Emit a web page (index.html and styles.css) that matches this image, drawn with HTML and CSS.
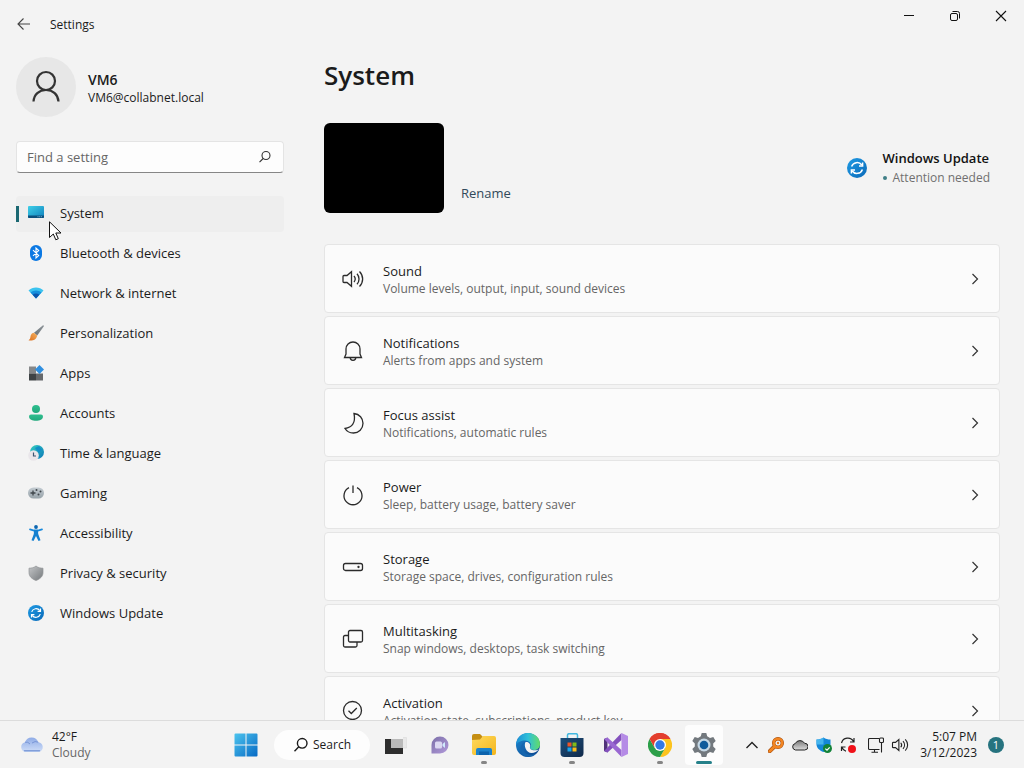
FILE: index.html
```html
<!DOCTYPE html>
<html lang="en">
<head>
    <meta charset="UTF-8">
    <meta name="viewport" content="width=device-width, initial-scale=1.0">
    <title>Settings</title>
    <link rel="stylesheet" href="styles.css">
</head>
<body>
    <!-- shared gradients and the update icon -->
    <svg class="defs" width="0" height="0" aria-hidden="true">
        <defs>
            <linearGradient id="screen" x1="0" y1="0" x2="1" y2="1"><stop offset="0" stop-color="#3fd0e8"/><stop offset="1" stop-color="#0f80bd"/></linearGradient>
            <linearGradient id="update-bg" x1="0" y1="0" x2="1" y2="1"><stop offset="0" stop-color="#1f9be4"/><stop offset="1" stop-color="#0a69b8"/></linearGradient>
            <linearGradient id="brush" x1="1" y1="0" x2="0" y2="1"><stop offset="0" stop-color="#8d9499"/><stop offset="1" stop-color="#6c7378"/></linearGradient>
            <linearGradient id="bristle" x1="1" y1="0" x2="0" y2="1"><stop offset="0" stop-color="#f5b260"/><stop offset="1" stop-color="#dc6f1e"/></linearGradient>
            <linearGradient id="person" x1="0" y1="0" x2="0" y2="1"><stop offset="0" stop-color="#2fbf8f"/><stop offset="1" stop-color="#21a87c"/></linearGradient>
            <linearGradient id="pad" x1="0" y1="0" x2="0" y2="1"><stop offset="0" stop-color="#c3cbd1"/><stop offset="1" stop-color="#98a3aa"/></linearGradient>
            <linearGradient id="shield" x1="0" y1="0" x2="1" y2="1"><stop offset="0" stop-color="#c4c6c8"/><stop offset="1" stop-color="#74787b"/></linearGradient>
            <linearGradient id="globe" x1="0" y1="0" x2="1" y2="1"><stop offset="0" stop-color="#35cfc0"/><stop offset="1" stop-color="#0b78b8"/></linearGradient>
            <linearGradient id="cloud" x1="0" y1="0" x2="0" y2="1"><stop offset="0" stop-color="#8eabe6"/><stop offset="1" stop-color="#cfdef8"/></linearGradient>
            <linearGradient id="win" x1="0" y1="0" x2="1" y2="1"><stop offset="0" stop-color="#4cc4ee"/><stop offset="1" stop-color="#0669c4"/></linearGradient>
            <linearGradient id="chat" x1="0" y1="0" x2="1" y2="1"><stop offset="0" stop-color="#7b6fa8"/><stop offset="1" stop-color="#b29ada"/></linearGradient>
            <linearGradient id="folder" x1="0" y1="0" x2="1" y2="1"><stop offset="0" stop-color="#ffda5e"/><stop offset="1" stop-color="#f3b51c"/></linearGradient>
            <linearGradient id="edge-top" x1="0" y1="0" x2="1" y2="0"><stop offset="0" stop-color="#1b8fd6"/><stop offset="0.5" stop-color="#2fc0d8"/><stop offset="1" stop-color="#63dc66"/></linearGradient>
            <linearGradient id="edge-low" x1="0" y1="0" x2="1" y2="1"><stop offset="0" stop-color="#1c8ad4"/><stop offset="1" stop-color="#0c3f86"/></linearGradient>
            <linearGradient id="bag" x1="0" y1="0" x2="1" y2="1"><stop offset="0" stop-color="#1c4f7c"/><stop offset="1" stop-color="#10294a"/></linearGradient>
            <linearGradient id="grey-cloud" x1="0" y1="0" x2="0" y2="1"><stop offset="0" stop-color="#777"/><stop offset="1" stop-color="#ddd"/></linearGradient>
        </defs>
        <symbol id="update" viewBox="0 0 20 20">
            <circle cx="10" cy="10" r="10" fill="url(#update-bg)"/>
            <path d="M4.600 8.600A5.800 5.800 0 0 1 14.800 7M15.400 11.400A5.800 5.800 0 0 1 5.200 13" fill="none" stroke="#fff" stroke-width="1.500"/>
            <path d="M15.600 4.400V8H12M4.400 15.600V12H8" fill="none" stroke="#fff" stroke-width="1.500"/>
        </symbol>
        <symbol id="chevron" viewBox="0 0 16 16">
            <path d="M5.500 3L10.500 8L5.500 13" fill="none" stroke="#333" stroke-width="1.200"/>
        </symbol>
    </svg>

    <div class="window">
        <header class="titlebar">
            <button class="back" aria-label="Back">
                <svg width="16" height="16" viewBox="0 0 16 16"><path d="M14 8H2.500M7.500 2.500L2 8L7.500 13.500" fill="none" stroke="#444" stroke-width="1.100"/></svg>
            </button>
            <span class="app-name">Settings</span>
            <div class="window-buttons">
                <button aria-label="Minimize"><svg width="12" height="12" viewBox="0 0 12 12"><path d="M1 5.500H11" stroke="#111"/></svg></button>
                <button aria-label="Restore"><svg width="12" height="12" viewBox="0 0 12 12" fill="none" stroke="#111"><rect x="1.500" y="3.500" width="7" height="7" rx="1.500"/><path d="M3.500 1.500H8.500A2 2 0 0 1 10.500 3.500V8.500"/></svg></button>
                <button aria-label="Close"><svg width="12" height="12" viewBox="0 0 12 12"><path d="M1 1L11 11M11 1L1 11" stroke="#111" stroke-width="1.100"/></svg></button>
            </div>
        </header>

        <div class="columns">
            <aside class="sidebar">
                <div class="profile">
                    <div class="avatar">
                        <svg width="32" height="36" viewBox="0 0 32 36" fill="none" stroke="#333" stroke-width="2.200"><circle cx="16" cy="12" r="9"/><path d="M3.500 32.500C4 25.500 9 21 16 21S28 25.500 28.500 32.500"/></svg>
                    </div>
                    <div class="user">
                        <div class="user-name">VM6</div>
                        <div class="user-mail">VM6@collabnet.local</div>
                    </div>
                </div>

                <div class="search-box">
                    <input type="text" placeholder="Find a setting" aria-label="Find a setting">
                    <svg width="14" height="14" viewBox="0 0 14 14" fill="none" stroke="#333" stroke-width="1.100"><circle cx="8" cy="5.500" r="4"/><path d="M5.200 8.500L1.500 12.200"/></svg>
                </div>

                <nav class="nav">
                    <a class="active" href="#system">
                        <svg width="16" height="16" viewBox="0 0 16 16"><rect y="1" width="16" height="12" rx="1" fill="url(#screen)"/><path d="M0 10.500H16V12A1 1 0 0 1 15 13H1A1 1 0 0 1 0 12Z" fill="#0b4f7d"/><path d="M9.500 11.700H14" stroke="#8ac7e2" stroke-width="0.800" stroke-dasharray="1 0.700"/></svg>
                        System
                    </a>
                    <a href="#bluetooth">
                        <svg width="16" height="16" viewBox="0 0 16 16"><rect x="2" width="12" height="16" rx="6" fill="#0b78e3"/><path d="M5 5.200L10.700 10.600L8 13V3L10.700 5.400L5 10.800" fill="none" stroke="#fff" stroke-width="1.100"/></svg>
                        Bluetooth &amp; devices
                    </a>
                    <a href="#network">
                        <svg width="16" height="16" viewBox="0 0 16 16"><path d="M0.500 5.500C4.500 1.500 11.500 1.500 15.500 5.500L8 13.500Z" fill="#3bc3ef"/><path d="M2.500 7.500C5.500 4.700 10.500 4.700 13.500 7.500L8 13.500Z" fill="#168fdc"/><path d="M4.600 9.700C6.500 8 9.500 8 11.400 9.700L8 13.500Z" fill="#0c55ac"/></svg>
                        Network &amp; internet
                    </a>
                    <a href="#personalization">
                        <svg width="16" height="16" viewBox="0 0 16 16"><path d="M14.700 0.400C15.600 0 16.100 0.700 15.700 1.500L9.200 10.500L6 7.700Z" fill="url(#brush)"/><path d="M6 7.700L9.200 10.500C8.500 15 4 16.300 0.500 15.300C2.700 14 2.100 12.500 2.700 10.500C3.200 8.800 4.500 8 6 7.700Z" fill="url(#bristle)"/></svg>
                        Personalization
                    </a>
                    <a href="#apps">
                        <svg width="16" height="16" viewBox="0 0 16 16"><rect x="1" y="1.500" width="7" height="7" fill="#858789"/><rect x="1" y="8.500" width="7" height="7" fill="#3e4245"/><rect x="8" y="8.500" width="7" height="7" fill="#66696c"/><path d="M11.500 0L16 4.500L11.500 9L7 4.500Z" fill="#2f8fe0"/></svg>
                        Apps
                    </a>
                    <a href="#accounts">
                        <svg width="16" height="16" viewBox="0 0 16 16"><circle cx="8" cy="4" r="4" fill="url(#person)"/><path d="M1 11.500Q1 9.500 3 9.500H13Q15 9.500 15 11.500C15 17.300 1 17.300 1 11.500Z" fill="url(#person)"/></svg>
                        Accounts
                    </a>
                    <a href="#time">
                        <svg width="16" height="16" viewBox="0 0 16 16"><circle cx="9" cy="7" r="7" fill="url(#globe)"/><path d="M7 3L11 1L14 5L11 8Z" fill="#128fc7"/><circle cx="5.500" cy="10.500" r="5.300" fill="#e9e6ea"/><path d="M5.500 7.500V11H8" fill="none" stroke="#3a5570" stroke-width="1.200"/></svg>
                        Time &amp; language
                    </a>
                    <a href="#gaming">
                        <svg width="16" height="16" viewBox="0 0 16 16"><rect y="2.500" width="16" height="11" rx="5.500" fill="url(#pad)"/><path d="M2.500 8H7.500M5 5.500V10.500" stroke="#3f464b" stroke-width="1.300"/><g fill="#3f464b"><circle cx="8.500" cy="5" r="1"/><circle cx="12.500" cy="6.500" r="1"/><circle cx="10.500" cy="9.500" r="1"/></g></svg>
                        Gaming
                    </a>
                    <a href="#accessibility">
                        <svg width="16" height="16" viewBox="0 0 16 16"><circle cx="8" cy="2" r="1.900" fill="#0c66b0"/><path d="M2 4.300L6 5.500H10L14 4.300" fill="none" stroke="#1889dc" stroke-width="1.800" stroke-linecap="round"/><path d="M6 5H10L10.200 9L12.500 15.200L10.500 16L8 11L5.500 16L3.500 15.200L5.800 9Z" fill="#1480d0"/></svg>
                        Accessibility
                    </a>
                    <a href="#privacy">
                        <svg width="16" height="16" viewBox="0 0 16 16"><path d="M8 1C10 2.700 12.500 3.200 15 3.200V7.500C15 11.500 12 14 8 15.500C4 14 1 11.500 1 7.500V3.200C3.500 3.200 6 2.700 8 1Z" fill="url(#shield)" stroke="#909396" stroke-width="0.700"/></svg>
                        Privacy &amp; security
                    </a>
                    <a href="#update-page">
                        <svg width="16" height="16"><use href="#update"/></svg>
                        Windows Update
                    </a>
                </nav>
            </aside>

            <main class="content">
                <h1>System</h1>

                <div class="device">
                    <div class="wallpaper"></div>
                    <a class="rename" href="#rename">Rename</a>
                    <a class="update-status" href="#update-page">
                        <svg width="20" height="20"><use href="#update"/></svg>
                        <span>
                            <strong>Windows Update</strong>
                            <small>Attention needed</small>
                        </span>
                    </a>
                </div>

                <div class="cards">
                    <button class="card">
                        <svg class="icon" width="24" height="24" viewBox="0 0 24 24"><path d="M2 9.500Q2 8.500 3 8.500H6L10.500 4.700V19.300L6 15.500H3Q2 15.500 2 14.500Z"/><path d="M13 9C14.400 10.700 14.400 13.300 13 15M16 6.800C18.700 9.800 18.700 14.200 16 17.200M18.500 4.500C22.700 8.800 22.700 15.200 18.500 19.500"/></svg>
                        <span class="label"><span class="name">Sound</span><span class="desc">Volume levels, output, input, sound devices</span></span>
                        <svg width="16" height="16"><use href="#chevron"/></svg>
                    </button>
                    <button class="card">
                        <svg class="icon" width="24" height="24" viewBox="0 0 24 24"><path d="M5 10A7 7 0 0 1 19 10V15L20.500 18.500H3.500L5 15ZM9.200 18.500A2.800 2.800 0 0 0 14.800 18.500"/></svg>
                        <span class="label"><span class="name">Notifications</span><span class="desc">Alerts from apps and system</span></span>
                        <svg width="16" height="16"><use href="#chevron"/></svg>
                    </button>
                    <button class="card">
                        <svg class="icon" width="24" height="24" viewBox="0 0 24 24"><path d="M13 2.500C18.500 3 22 7.300 22 12.300C22 18 17.800 22 12.500 22C8.800 22 5.500 20 4 17.500C10.500 16.500 15 12.500 13 2.500Z"/></svg>
                        <span class="label"><span class="name">Focus assist</span><span class="desc">Notifications, automatic rules</span></span>
                        <svg width="16" height="16"><use href="#chevron"/></svg>
                    </button>
                    <button class="card">
                        <svg class="icon" width="24" height="24" viewBox="0 0 24 24"><path d="M12 2.500V10M8 4.700A9 9 0 1 0 16 4.700"/></svg>
                        <span class="label"><span class="name">Power</span><span class="desc">Sleep, battery usage, battery saver</span></span>
                        <svg width="16" height="16"><use href="#chevron"/></svg>
                    </button>
                    <button class="card">
                        <svg class="icon" width="24" height="24" viewBox="0 0 24 24"><rect x="2.500" y="8.500" width="19" height="7" rx="2"/><circle cx="17.500" cy="12" r="0.500"/></svg>
                        <span class="label"><span class="name">Storage</span><span class="desc">Storage space, drives, configuration rules</span></span>
                        <svg width="16" height="16"><use href="#chevron"/></svg>
                    </button>
                    <button class="card">
                        <svg class="icon" width="24" height="24" viewBox="0 0 24 24"><rect x="7.500" y="3.500" width="14" height="11.500" rx="1.500"/><path d="M7.500 8.500H4Q2.500 8.500 2.500 10V18.500Q2.500 20 4 20H14.500Q16 20 16 18.500V15"/></svg>
                        <span class="label"><span class="name">Multitasking</span><span class="desc">Snap windows, desktops, task switching</span></span>
                        <svg width="16" height="16"><use href="#chevron"/></svg>
                    </button>
                    <button class="card">
                        <svg class="icon" width="24" height="24" viewBox="0 0 24 24"><circle cx="11.500" cy="11.500" r="9"/><path d="M7.500 11.700L10.300 14.500L15.800 9"/></svg>
                        <span class="label"><span class="name">Activation</span><span class="desc">Activation state, subscriptions, product key</span></span>
                        <svg width="16" height="16"><use href="#chevron"/></svg>
                    </button>
                </div>
            </main>
        </div>
    </div>

    <footer class="taskbar">
        <button class="weather">
            <svg width="24" height="24" viewBox="0 0 24 24"><path d="M5.500 19A5 5 0 0 1 5 9.200A7 7 0 0 1 18.300 9.200A5 5 0 0 1 19 19Z" fill="url(#cloud)"/><path d="M4.500 17.800H19.500" stroke="#829fda" stroke-width="1.500" stroke-linecap="round"/><path d="M5 9.200Q8 8.500 10 11M12 10Q15 7.500 18.300 9.200" fill="none" stroke="#7895d6"/></svg>
            <span class="forecast"><span>42°F</span><span class="sky">Cloudy</span></span>
        </button>

        <div class="apps">
            <button class="app" aria-label="Start">
                <svg width="24" height="24" viewBox="0 0 24 24"><path d="M0.500 1.500A1 1 0 0 1 1.500 0.500H11.500V11.500H0.500ZM12.500 0.500H22.500A1 1 0 0 1 23.500 1.500V11.500H12.500ZM0.500 12.500H11.500V23.500H1.500A1 1 0 0 1 0.500 22.500ZM12.500 12.500H23.500V22.500A1 1 0 0 1 22.500 23.500H12.500Z" fill="url(#win)"/></svg>
            </button>
            <button class="search-pill">
                <svg width="16" height="16" viewBox="0 0 16 16" fill="none" stroke="#1a1a1a" stroke-width="1.400"><circle cx="9.200" cy="6.300" r="4.800"/><path d="M5.800 9.800L1.500 14.200"/></svg>
                Search
            </button>
            <button class="app" aria-label="Task view">
                <svg width="24" height="24" viewBox="0 0 24 24"><rect x="1" y="6" width="18" height="15" fill="#2d2d2d"/><rect x="7" y="6" width="12" height="9" fill="#b9b9b9"/><path d="M19 4.500H22.500V15H19" fill="#e8e8e8" stroke="#dadada" stroke-width="0.600"/></svg>
            </button>
            <button class="app" aria-label="Chat">
                <svg width="24" height="24" viewBox="0 0 24 24"><path d="M3.500 20.500V12A8.500 8.500 0 1 1 12 20.500Z" fill="url(#chat)"/><rect x="7" y="8.500" width="7" height="7" rx="1.500" fill="#dcd8f2"/><path d="M14.500 11L17 9V15L14.500 13Z" fill="#cfeafc"/></svg>
            </button>
            <button class="app open" aria-label="File Explorer">
                <svg width="24" height="24" viewBox="0 0 24 24"><path d="M0 3Q0 1 2 1H8L11 4V8H0Z" fill="#c58e13"/><path d="M0 7L8 6.500L11 3H22Q24 3 24 5V20Q24 22 22 22H2Q0 22 0 20Z" fill="url(#folder)"/><path d="M4 22V17Q4 15 6 15H18Q20 15 20 17V22Z" fill="#1b82cc"/><path d="M7 22V18.500H17V22Z" fill="#0c63ad"/></svg>
            </button>
            <button class="app" aria-label="Edge">
                <svg width="24" height="24" viewBox="0 0 24 24"><circle cx="12" cy="12" r="12" fill="url(#edge-low)"/><path d="M0.300 10C1.500 4 6 0 12 0C19 0 24 5 24 11C24 15 21 17 18 17C15 17 13.500 15.700 14.200 14.500C16.500 10.500 13 7.500 9 7.500C5 7.500 1.500 9 0.300 12Z" fill="url(#edge-top)"/><path d="M9.500 9C13 8.500 15 11.500 14 14C13.400 15.700 15.500 17.500 19 17.300C21 17.200 22 16.500 22.700 16.200C21 18.700 18.500 20 15.700 20C10 20 7.500 12.500 9.500 9Z" fill="#f3f3f3"/><path d="M9.500 9C6 11 6.500 18 10 20.500C13 22.500 17 22 20 20.500C17.500 23.500 12.500 24.500 8.500 23.200C3 20 3.500 10.500 9.500 9Z" fill="#1565ae"/></svg>
            </button>
            <button class="app open" aria-label="Store">
                <svg width="24" height="24" viewBox="0 0 24 24"><path d="M7.500 6V2Q7.500 0.700 9 0.700H16Q17.500 0.700 17.500 2V6" fill="none" stroke="#41b8e0" stroke-width="1.500"/><path d="M0.500 5H23.500V20Q23.500 24 19.500 24H4.500Q0.500 24 0.500 20Z" fill="url(#bag)"/><path d="M7.500 9.500H11.500V13.500H7.500Z" fill="#ee5426"/><path d="M12.500 9.500H16.500V13.500H12.500Z" fill="#81bb18"/><path d="M7.500 14.500H11.500V18.500H7.500Z" fill="#1aa3ea"/><path d="M12.500 14.500H16.500V18.500H12.500Z" fill="#fbbb19"/></svg>
            </button>
            <button class="app" aria-label="Visual Studio">
                <svg width="24" height="24" viewBox="0 0 24 24"><path d="M0 6L3.500 4.500V19.500L0 18Z" fill="#51327a"/><path d="M0 18L17.500 0V7L3.500 19.500Z" fill="#8350bd"/><path d="M0 6L3.500 4.500L17.500 17V24Z" fill="#9a68d2"/><path d="M17.500 0L24 3V21L17.500 24Z" fill="#b58be6"/></svg>
            </button>
            <button class="app open" aria-label="Chrome">
                <svg width="24" height="24" viewBox="0 0 24 24"><path d="M12 12L1.600 6A12 12 0 0 1 22.400 6Z" fill="#e33e2e"/><path d="M12 12V6H22.400A12 12 0 0 1 12 24L17.200 15Z" fill="#fcc31e"/><path d="M12 12L6.800 15L1.600 6A12 12 0 0 0 12 24L17.200 15Z" fill="#2c9f49"/><path d="M12 6H22.400A12 12 0 0 0 1.600 6L6.800 15Z" fill="#e33e2e"/><circle cx="12" cy="12" r="6" fill="#fff"/><circle cx="12" cy="12" r="4.700" fill="#3179e5"/></svg>
            </button>
            <button class="app open current" aria-label="Settings">
                <svg width="24" height="24" viewBox="0 0 24 24"><path d="M9.700 0H14.300L15.200 3.300L18 5L21.300 4L23.700 8L21.200 10.400V13.600L23.700 16L21.300 20L18 19L15.200 20.700L14.300 24H9.700L8.800 20.700L6 19L2.700 20L0.300 16L2.800 13.600V10.400L0.300 8L2.700 4L6 5L8.800 3.300Z" fill="#73797e"/><circle cx="12" cy="12" r="6.500" fill="#c6d8e5"/><circle cx="12" cy="12" r="4.300" fill="#105b9b"/></svg>
            </button>
        </div>

        <div class="tray">
            <button aria-label="Show hidden icons"><svg width="16" height="16" viewBox="0 0 16 16"><path d="M2.500 11L8 5.500L13.500 11" fill="none" stroke="#222" stroke-width="1.400"/></svg></button>
            <button aria-label="Search tool"><svg width="16" height="16" viewBox="0 0 16 16"><circle cx="10" cy="6" r="4.300" fill="none" stroke="#a44a0a" stroke-width="3.400"/><path d="M6.500 9.500L1.800 14.200" stroke="#a44a0a" stroke-width="4" stroke-linecap="round"/><circle cx="10" cy="6" r="4.300" fill="none" stroke="#f28522" stroke-width="2.400"/><path d="M6.500 9.500L1.800 14.200" stroke="#f28522" stroke-width="2.800" stroke-linecap="round"/><circle cx="10" cy="6" r="1.200" fill="#e9781a"/></svg></button>
            <button aria-label="OneDrive"><svg width="16" height="16" viewBox="0 0 16 16"><path d="M3.500 13A3.300 3.300 0 0 1 3.300 6.500A5.200 5.200 0 0 1 12.500 6.200A3.400 3.400 0 0 1 12.700 13Z" fill="url(#grey-cloud)" stroke="#222"/></svg></button>
            <button aria-label="Windows Security"><svg width="16" height="16" viewBox="0 0 16 16"><path d="M7.500 0.500C9.500 2 12 2.500 14.500 2.500V7C14.500 11 11.500 13.500 7.500 15C3.500 13.500 0.500 11 0.500 7V2.500C3 2.500 5.500 2 7.500 0.500Z" fill="#1487d8"/><path d="M7.500 0.500V7.500H0.500V2.500C3 2.500 5.500 2 7.500 0.500Z" fill="#45b5ee"/><circle cx="11.500" cy="11.500" r="4.500" fill="#128238"/><path d="M9.300 11.600L11 13.200L13.700 10.300" fill="none" stroke="#fff" stroke-width="1.200"/></svg></button>
            <button aria-label="Update status"><svg width="16" height="16" viewBox="0 0 16 16"><path d="M1.500 6A6.500 6.500 0 0 1 13.500 4.500M14 1V5H10M6 14.300A6.500 6.500 0 0 1 2 10.500M1.500 14V10H5.500" fill="none" stroke="#222" stroke-width="1.200"/><circle cx="12" cy="12" r="4" fill="#f01018"/></svg></button>
            <button class="network" aria-label="Network"><svg width="16" height="16" viewBox="0 0 16 16" fill="none" stroke="#222" stroke-width="1.100"><path d="M11 1.500H1.500Q0.500 1.500 0.500 2.500V11.500Q0.500 12.500 1.500 12.500H11.500M6.500 12.500V15M3.500 15.200H10"/><rect x="11.500" y="1" width="4" height="4.500" rx="1"/><path d="M13.500 5.500V15.500"/></svg></button>
            <button aria-label="Volume"><svg width="18" height="18" viewBox="0 0 24 24" fill="none" stroke="#222" stroke-width="1.500"><path d="M2 9.500Q2 8.500 3 8.500H6L10.500 4.700V19.300L6 15.500H3Q2 15.500 2 14.500Z"/><path d="M13 9C14.400 10.700 14.400 13.300 13 15M16 6.800C18.700 9.800 18.700 14.200 16 17.200M19 4.500C23.200 8.800 23.200 15.200 19 19.500"/></svg></button>
            <div class="clock"><span>5:07 PM</span><span>3/12/2023</span></div>
            <div class="badge">1</div>
        </div>
    </footer>

    <svg class="cursor" width="13" height="20" viewBox="0 0 13 20"><path d="M0.500 0.800V16.500L4.300 13L6.800 18.800L9.300 17.700L6.800 12H12Z" fill="#fff" stroke="#111"/></svg>
</body>
</html>
```
FILE: styles.css
```css
* {
    box-sizing: border-box;
}

body {
    font-family: 'Open Sans', 'Noto Sans', sans-serif;
    font-size: 13px;
    background-color: #f3f3f3;
    color: #1b1b1b;
    display: flex;
    flex-direction: column;
    height: 100vh;
    margin: 0;
    overflow: hidden;
}

button {
    font: inherit;
    color: inherit;
    background: none;
    border: none;
    padding: 0;
}

a {
    color: inherit;
    text-decoration: none;
}

svg {
    flex-shrink: 0;
}

.defs {
    position: absolute;
}

.window {
    flex: 1;
    min-height: 0;
    overflow: hidden;
}

/* title bar */
.titlebar {
    display: flex;
    align-items: center;
    height: 48px;
    padding-left: 16px;
}

.back {
    display: flex;
}

.app-name {
    font-size: 12px;
    margin-left: 18px;
}

.window-buttons {
    display: flex;
    align-self: flex-start;
    margin-left: auto;
}

.window-buttons button {
    display: flex;
    align-items: center;
    justify-content: center;
    width: 46px;
    height: 32px;
}

.columns {
    display: flex;
    gap: 40px;
    padding: 0 24px 0 16px;
}

/* sidebar */
.sidebar {
    flex: 0 0 268px;
    padding-top: 9px;
}

.profile {
    display: flex;
    align-items: center;
    gap: 12px;
}

.avatar {
    display: flex;
    align-items: center;
    justify-content: center;
    width: 60px;
    height: 60px;
    border-radius: 50%;
    background-color: #e7e7e7;
}

.user {
    padding-top: 2px;
}

.user-name {
    font-size: 14px;
    font-weight: 600;
    line-height: 20px;
}

.user-mail {
    font-size: 12px;
    line-height: 16px;
}

.search-box {
    display: flex;
    align-items: center;
    height: 32px;
    margin: 24px 0 23px;
    padding: 0 11px 0 10px;
    background-color: #fdfdfd;
    border: 1px solid #e4e4e4;
    border-bottom-color: #868686;
    border-radius: 4px;
}

.search-box input {
    flex: 1;
    min-width: 0;
    font: inherit;
    background: none;
    border: none;
    outline: none;
    padding: 0;
}

.search-box input::placeholder {
    color: #666;
    opacity: 1;
}

.nav {
    display: flex;
    flex-direction: column;
    gap: 4px;
}

.nav a {
    display: flex;
    align-items: center;
    gap: 16px;
    height: 36px;
    padding: 0 0 2px 12px;
    border-radius: 4px;
}

.nav .active {
    background: linear-gradient(#1b6872, #1b6872) left center / 3px 16px no-repeat #eee;
}

/* main page */
.content {
    flex: 1;
    min-width: 0;
    padding-top: 7px;
}

h1 {
    font-size: 26px;
    font-weight: 600;
    line-height: 40px;
    margin: 0 0 28px;
}

.device {
    display: flex;
    align-items: center;
    margin-bottom: 31px;
}

.wallpaper {
    width: 120px;
    height: 90px;
    border-radius: 6px;
    background-color: #000;
}

.rename {
    align-self: flex-end;
    margin: 0 0 11px 17px;
    color: #31495a;
}

.update-status {
    display: flex;
    align-items: center;
    gap: 16px;
    margin-left: auto;
    padding-right: 10px;
}

.update-status strong {
    display: block;
    font-weight: 600;
    line-height: 20px;
    color: #111;
}

.update-status small {
    display: flex;
    align-items: center;
    gap: 6px;
    font-size: 12px;
    line-height: 20px;
    color: #707070;
}

.update-status small::before {
    content: '';
    width: 4px;
    height: 4px;
    border-radius: 50%;
    background-color: #3f7f87;
}

.cards {
    display: flex;
    flex-direction: column;
    gap: 3px;
}

.card {
    display: flex;
    align-items: center;
    height: 69px;
    padding: 0 16px;
    text-align: left;
    background-color: #fbfbfb;
    border: 1px solid #e5e5e5;
    border-radius: 4px;
}

.icon {
    fill: none;
    stroke: #2b2b2b;
    stroke-width: 1.3px;
}

.label {
    flex: 1;
    margin-left: 18px;
}

.name,
.desc {
    display: block;
}

.name {
    line-height: 20px;
}

.desc {
    font-size: 12px;
    line-height: 16px;
    color: #666;
}

/* taskbar */
.taskbar {
    display: flex;
    align-items: center;
    gap: 14px;
    height: 48px;
    padding: 0 20px;
    font-size: 12px;
    line-height: 16px;
    background-color: #f3f3f3;
    border-top: 1px solid #dcdcdc;
}

.weather {
    flex: 1;
    display: flex;
    align-items: center;
    gap: 8px;
    text-align: left;
}

.forecast,
.clock {
    display: flex;
    flex-direction: column;
}

.sky {
    color: #666;
}

.apps {
    display: flex;
    align-items: center;
}

.app {
    position: relative;
    display: flex;
    align-items: center;
    justify-content: center;
    width: 44px;
    height: 40px;
    border-radius: 4px;
}

/* running indicator under the icon */
.open::after {
    content: '';
    position: absolute;
    bottom: 1px;
    left: 50%;
    width: 6px;
    height: 3px;
    margin-left: -3px;
    border-radius: 2px;
    background-color: #858585;
}

.current {
    width: 38px;
    margin: 0 3px;
    background-color: #fdfdfd;
}

.current::after {
    width: 16px;
    margin-left: -8px;
    background-color: #26818a;
}

.search-pill {
    display: flex;
    align-items: center;
    justify-content: center;
    gap: 4px;
    width: 96px;
    height: 30px;
    margin: 0 4px 0 6px;
    border-radius: 15px;
    background-color: #fdfdfd;
}

.tray {
    display: flex;
    align-items: center;
}

.tray button {
    display: flex;
    justify-content: center;
    width: 24px;
}

.tray .network {
    margin-left: 4px;
}

.clock {
    min-width: 65px;
    text-align: right;
}

.badge {
    width: 16px;
    height: 16px;
    margin-left: 11px;
    border-radius: 50%;
    font-size: 11px;
    text-align: center;
    color: #fff;
    background-color: #26737f;
}

.cursor {
    position: absolute;
    left: 49px;
    top: 221px;
}
```
